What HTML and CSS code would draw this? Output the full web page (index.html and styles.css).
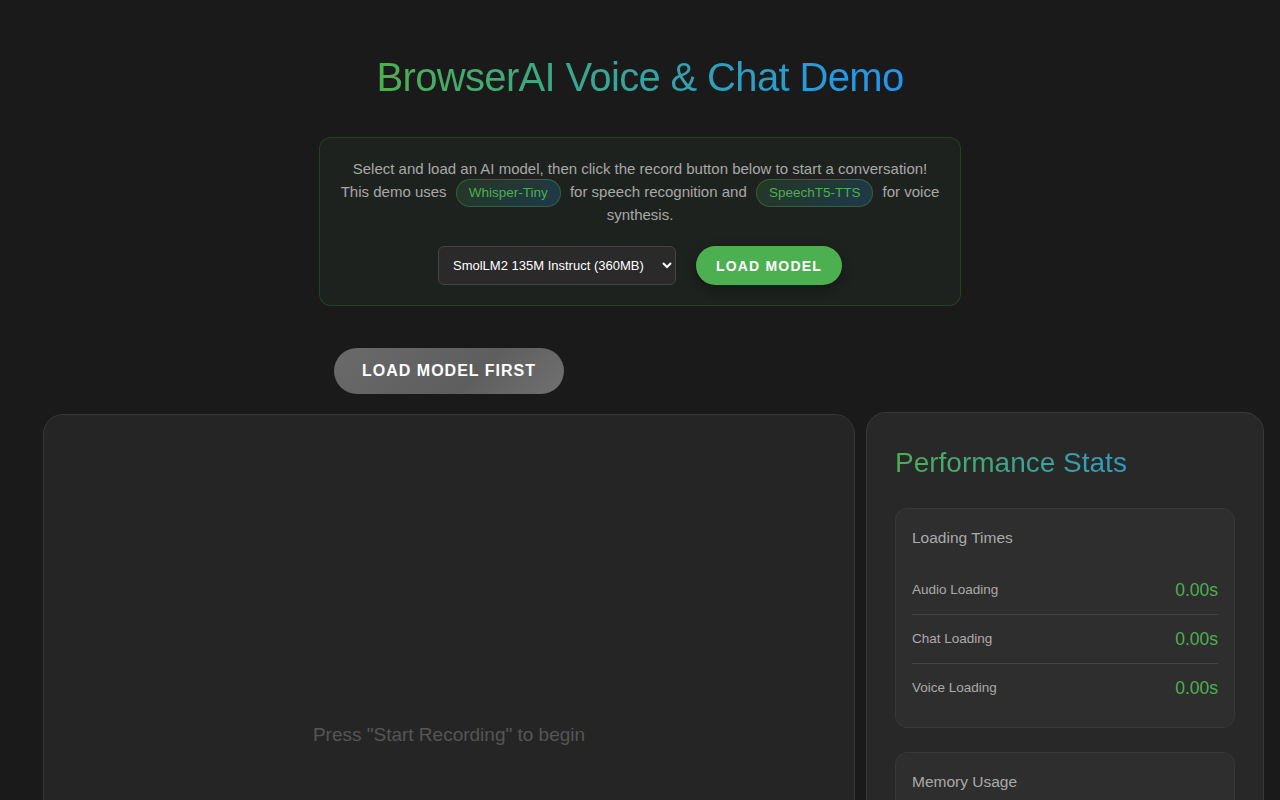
FILE: index.html
```html
<!DOCTYPE html>
<html lang="en">
  <head>
    <meta charset="UTF-8" />
    <meta name="viewport" content="width=device-width, initial-scale=1.0" />
    <title>BrowserAI Voice &amp; Chat Demo</title>
    <link rel="stylesheet" href="styles.css">
  </head>
  <body>
    <h1 class="title">BrowserAI Voice &amp; Chat Demo</h1>

    <div class="intro">
      <p>
        Select and load an AI model, then click the record button below to start a conversation!
        This demo uses <span class="badge">Whisper-Tiny</span> for speech recognition and
        <span class="badge">SpeechT5-TTS</span> for voice synthesis.
      </p>
      <div class="model-controls">
        <select class="model-select">
          <option>SmolLM2 135M Instruct (360MB)</option>
        </select>
        <button class="load-btn">Load Model</button>
      </div>
    </div>

    <div class="main">
      <div class="chat-column">
        <button class="record-btn" disabled>Load Model First</button>
        <div class="chat-panel">
          <div class="visualizer"></div>
          <div class="placeholder">Press "Start Recording" to begin</div>
        </div>
      </div>

      <div class="stats-panel">
        <h2 class="stats-title">Performance Stats</h2>

        <div class="stats-card">
          <h3>Loading Times</h3>
          <div class="stat-row">
            <span class="stat-label">Audio Loading</span>
            <span class="stat-value">0.00s</span>
          </div>
          <div class="stat-row">
            <span class="stat-label">Chat Loading</span>
            <span class="stat-value">0.00s</span>
          </div>
          <div class="stat-row">
            <span class="stat-label">Voice Loading</span>
            <span class="stat-value">0.00s</span>
          </div>
        </div>

        <div class="stats-card">
          <h3>Memory Usage</h3>
          <div class="stat-row">
            <span class="stat-label">Heap Used</span>
            <span class="stat-value">0 MB</span>
          </div>
          <div class="stat-row">
            <span class="stat-label">Heap Total</span>
            <span class="stat-value">0 MB</span>
          </div>
        </div>
      </div>
    </div>
  </body>
</html>
```

FILE: styles.css
```css
body {
  font-family: "Liberation Sans", Arial, sans-serif;
  margin: 0;
  padding: 0;
  background: #1a1a1a;
  color: #e0e0e0;
  overflow: hidden;
}

.title {
  font-size: 40px;
  font-weight: normal;
  letter-spacing: -0.65px;
  text-align: center;
  margin: 54px auto 37px;
  line-height: 46px;
  background: linear-gradient(90deg, #4caf50 0%, #2196f3 100%);
  -webkit-background-clip: text;
  background-clip: text;
  color: transparent;
  width: fit-content;
}

.intro {
  width: 600px;
  margin: 0 auto;
  padding: 20px;
  background: #1e221e;
  border: 1px solid rgba(76, 175, 80, 0.2);
  border-radius: 12px;
  text-align: center;
}

.intro p {
  margin: 0;
  font-size: 15px;
  line-height: 22.5px;
  color: #a8a8a8;
}

.badge {
  display: inline-block;
  vertical-align: middle;
  margin: -3px 5px -3px;
  padding: 2px 12px;
  line-height: 22px;
  font-size: 13.5px;
  color: #4caf50;
  border: 1px solid rgba(76, 175, 80, 0.35);
  border-radius: 14px;
  background: linear-gradient(135deg, rgba(76, 175, 80, 0.15), rgba(33, 150, 243, 0.2));
}

.model-controls {
  display: flex;
  justify-content: center;
  gap: 20px;
  margin-top: 20px;
}

.model-select {
  width: 238px;
  height: 39px;
  padding: 0 8px 0 10px;
  font-family: "Liberation Sans", Arial, sans-serif;
  font-size: 13px;
  color: #fff;
  background: #2a2a2a;
  border: 1px solid #444;
  border-radius: 6px;
}

.load-btn {
  width: 146px;
  height: 39px;
  font-family: "Liberation Sans", Arial, sans-serif;
  font-size: 14px;
  font-weight: bold;
  letter-spacing: 1.2px;
  text-transform: uppercase;
  color: #fff;
  background: #4caf50;
  border: none;
  border-radius: 20px;
  box-shadow: 0 4px 12px rgba(0, 0, 0, 0.35);
}

.main {
  display: flex;
  align-items: flex-start;
  gap: 11px;
  padding: 42px 16px 0 43px;
}

.chat-column {
  flex: 1;
  display: flex;
  flex-direction: column;
  align-items: center;
  gap: 20px;
}

.record-btn {
  width: 230px;
  height: 46px;
  font-family: "Liberation Sans", Arial, sans-serif;
  font-size: 16px;
  font-weight: bold;
  letter-spacing: 1px;
  text-transform: uppercase;
  color: #fff;
  background: linear-gradient(135deg, #6a6a6a, #5e5e5e 60%, #707070);
  border: none;
  border-radius: 23px;
}

.chat-panel {
  align-self: stretch;
  height: 600px;
  background: #252525;
  border: 1px solid #363636;
  border-radius: 20px;
  display: flex;
  flex-direction: column;
  align-items: center;
}

.visualizer {
  height: 309px;
}

.placeholder {
  font-size: 19px;
  color: #555;
}

.stats-panel {
  width: 340px;
  margin-top: 64px;
  padding: 28px;
  background: #282828;
  border: 1px solid #3a3a3a;
  border-radius: 20px;
}

.stats-title {
  font-size: 28px;
  font-weight: normal;
  line-height: 34px;
  margin: 5px 0 28px;
  background: linear-gradient(90deg, #4caf50 0%, #2196f3 140%);
  -webkit-background-clip: text;
  background-clip: text;
  color: transparent;
  width: fit-content;
}

.stats-card {
  padding: 19px 16px 15px;
  margin-bottom: 24px;
  background: #2e2e2e;
  border: 1px solid #383838;
  border-radius: 12px;
}

.stats-card h3 {
  margin: 0 0 18px;
  font-size: 15.5px;
  font-weight: normal;
  line-height: 20px;
  color: #aaa;
}

.stat-row {
  display: flex;
  justify-content: space-between;
  align-items: center;
  padding: 12px 0;
  line-height: 24px;
  border-bottom: 1px solid #444;
}

.stat-row:last-child {
  border-bottom: none;
}

.stat-label {
  font-size: 13.5px;
  color: #aaa;
}

.stat-value {
  font-size: 17.5px;
  color: #4caf50;
}
```
